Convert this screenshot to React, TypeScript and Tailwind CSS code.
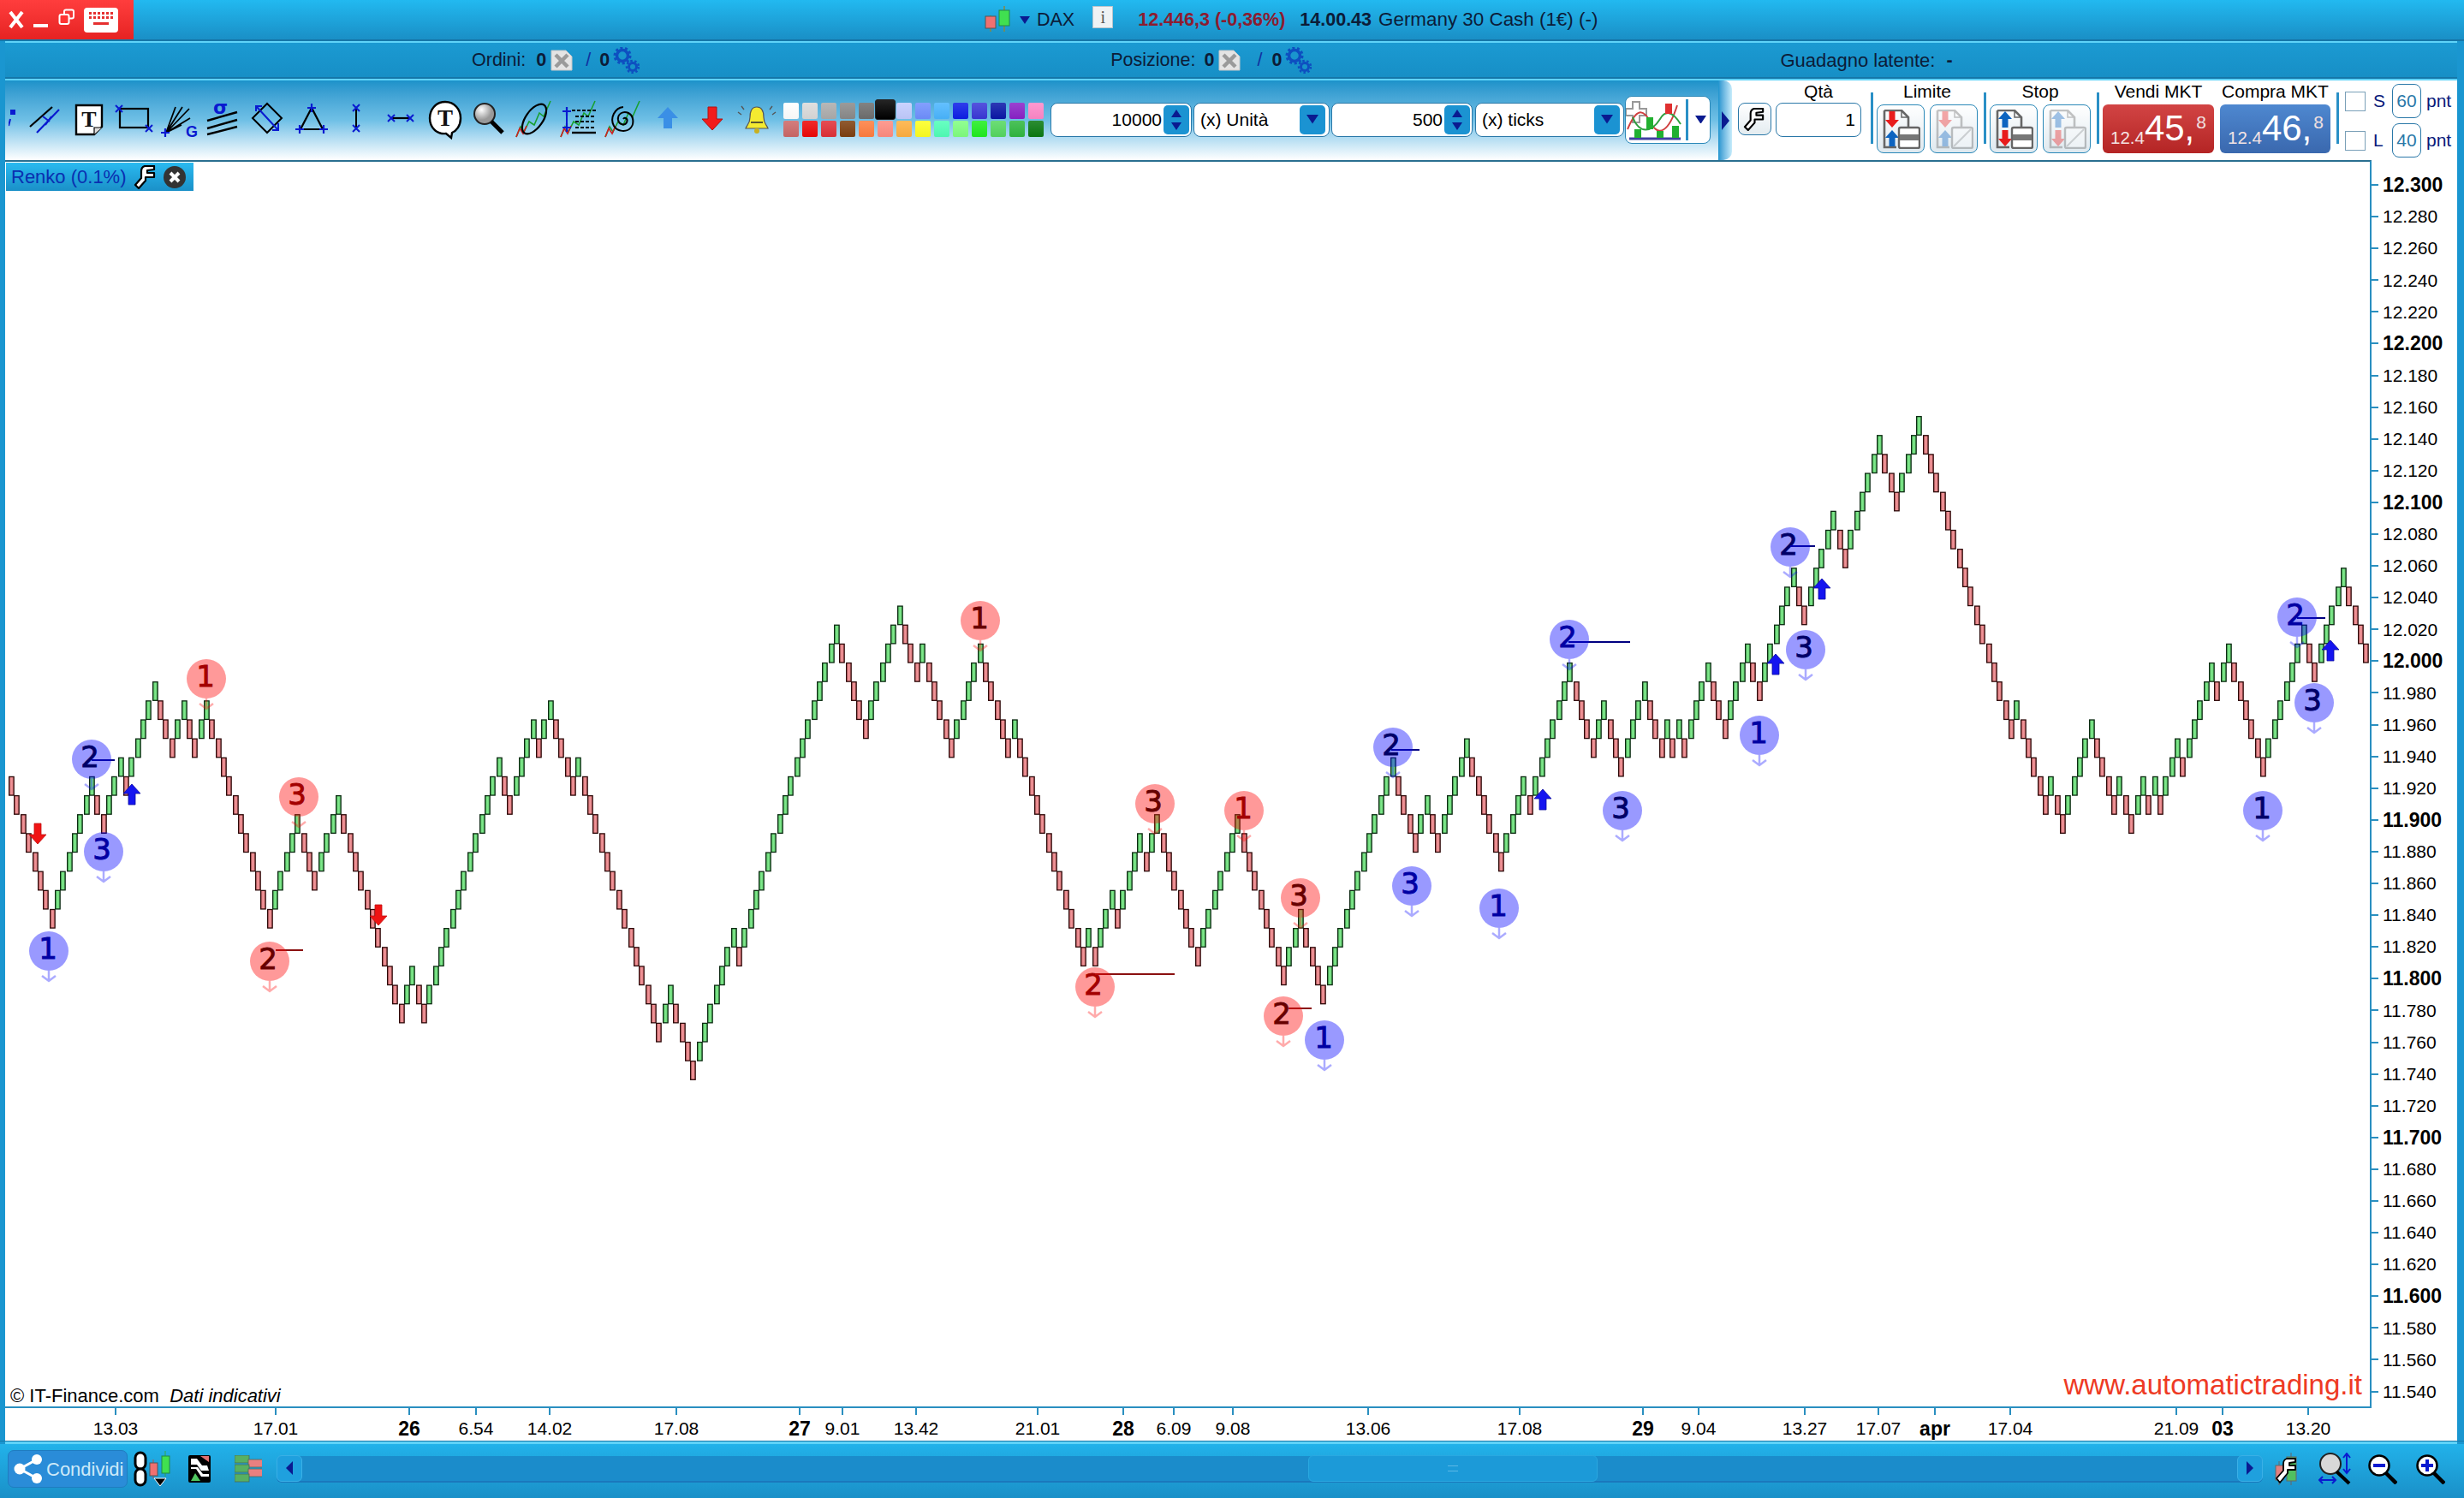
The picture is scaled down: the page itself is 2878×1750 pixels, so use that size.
import React from "react";

const B = "#0a1ad0";
const runs = [-7,7,-2,3,-1,5,-3,2,-2,2,-11,5,-3,4,-11,2,-2,13,-2,4,-1,2,-4,1,-14,2,-4,7,-1,17,-5,6,-3,1,-5,5,-5,1,-12,1,-1,3,-1,4,-1,2,-7,7,-8,3,-4,12,-4,2,-2,5,-6,4,-1,7,-4,2,-3,4,-3,1,-1,1,-1,4,-3,4,-2,6,-2,5,-2,6,-3,4,-16,1,-5,1,-2,5,-4,1,-2,2,-1,1,-1,3,-1,5,-1,2,-6,7,-2,5,-4];

function bricks() {
  const out: { x: number; y: number; up: boolean }[] = [];
  let k = 5;
  let i = 0;
  const push = (up: boolean) => {
    out.push({ x: Math.round((10.3 + i * 6.692) / 2) * 2, y: 796.3 + 22.15 * k, up });
    i++;
  };
  push(false);
  for (const r of runs) {
    const up = r > 0;
    for (let n = 0; n < Math.abs(r); n++) {
      k += up ? -1 : 1;
      push(up);
    }
  }
  return out;
}

type Mark = { c: "b" | "r"; n: string; x: number; y: number; dark: boolean; line?: [number, number, number] };
const marks: Mark[] = [
  { c: "b", n: "1", x: 57, y: 1111, dark: false },
  { c: "b", n: "2", x: 107, y: 887, dark: true, line: [107, 134, 888] },
  { c: "b", n: "3", x: 121, y: 995, dark: false },
  { c: "r", n: "1", x: 241, y: 793, dark: false },
  { c: "r", n: "3", x: 349, y: 931, dark: false },
  { c: "r", n: "2", x: 315, y: 1123, dark: true, line: [322, 354, 1110] },
  { c: "r", n: "1", x: 1145, y: 725, dark: true },
  { c: "r", n: "3", x: 1349, y: 939, dark: true },
  { c: "r", n: "2", x: 1279, y: 1153, dark: false, line: [1279, 1372, 1138] },
  { c: "r", n: "1", x: 1453, y: 947, dark: false },
  { c: "r", n: "3", x: 1519, y: 1049, dark: true },
  { c: "r", n: "2", x: 1499, y: 1187, dark: true, line: [1505, 1532, 1178] },
  { c: "b", n: "1", x: 1547, y: 1215, dark: false },
  { c: "b", n: "2", x: 1627, y: 873, dark: true, line: [1625, 1658, 876] },
  { c: "b", n: "3", x: 1649, y: 1035, dark: false },
  { c: "b", n: "1", x: 1751, y: 1061, dark: false },
  { c: "b", n: "2", x: 1833, y: 747, dark: false, line: [1832, 1904, 750] },
  { c: "b", n: "3", x: 1895, y: 947, dark: true },
  { c: "b", n: "2", x: 2091, y: 639, dark: true, line: [2091, 2120, 638] },
  { c: "b", n: "3", x: 2109, y: 759, dark: true },
  { c: "b", n: "1", x: 2055, y: 859, dark: false },
  { c: "b", n: "2", x: 2683, y: 721, dark: false, line: [2683, 2716, 722] },
  { c: "b", n: "3", x: 2703, y: 821, dark: true },
  { c: "b", n: "1", x: 2643, y: 947, dark: true },
];
const upArrows = [[154, 916], [1802, 922], [2074, 764], [2128, 676], [2722, 748]];
const downArrows = [[44, 962], [442, 1057]];

const xLabels: [string, number, boolean][] = [
  ["13.03", 135, false], ["17.01", 322, false], ["26", 478, true], ["6.54", 556, false], ["14.02", 642, false],
  ["17.08", 790, false], ["27", 934, true], ["9.01", 984, false], ["13.42", 1070, false], ["21.01", 1212, false],
  ["28", 1312, true], ["6.09", 1371, false], ["9.08", 1440, false], ["13.06", 1598, false], ["17.08", 1775, false],
  ["29", 1919, true], ["9.04", 1984, false], ["13.27", 2108, false], ["17.07", 2194, false], ["apr", 2260, true],
  ["17.04", 2348, false], ["21.09", 2542, false], ["03", 2596, true], ["13.20", 2696, false],
];

const yLabels = Array.from({ length: 39 }, (_, i) => {
  const v = 12300 - i * 20;
  return { t: `${Math.floor(v / 1000)}.${String(v % 1000).padStart(3, "0")}`, bold: v % 100 === 0 };
});

function Chart() {
  const bs = bricks();
  return (
    <svg viewBox="6 189 2762 1454" className="block w-full h-full">
      <defs>
        <linearGradient id="gb">
          <stop offset="0" stopColor="#5cc868" />
          <stop offset="0.5" stopColor="#7fe88c" />
          <stop offset="1" stopColor="#5cc868" />
        </linearGradient>
        <linearGradient id="rb">
          <stop offset="0" stopColor="#d87478" />
          <stop offset="0.5" stopColor="#f09498" />
          <stop offset="1" stopColor="#d87478" />
        </linearGradient>
      </defs>
      {bs.map((b, i) => (
        <rect key={i} x={b.x + 0.65} y={b.y + 0.4} width={5.5} height={21.6} fill={b.up ? "url(#gb)" : "url(#rb)"} stroke={b.up ? "#0c2a12" : "#2c0808"} strokeWidth={1.3} />
      ))}
      {marks.map((m, i) => {
        const fill = m.c === "b" ? "#0000ff" : "#ff0000";
        const ink = m.dark ? "#000000" : m.c === "b" ? "#000066" : "#660000";
        const lineCol = m.c === "b" ? "#000080" : "#8a1010";
        return (
          <g key={i}>
            <text x={m.x - (m.n === "1" ? 1 : 2)} y={m.y + 9} textAnchor="middle" fontFamily="DejaVu Sans, sans-serif" fontSize={34} fill={ink} stroke={ink} strokeWidth={0.9}>{m.n}</text>
            {m.line && <line x1={m.line[0]} x2={m.line[1]} y1={m.line[2]} y2={m.line[2]} stroke={lineCol} strokeWidth={2} />}
            <circle cx={m.x} cy={m.y} r={23} fill={fill} fillOpacity={0.4} />
            <path d={`M${m.x} ${m.y + 23}V${m.y + 35}M${m.x - 8} ${m.y + 29}L${m.x} ${m.y + 35}L${m.x + 8} ${m.y + 29}`} stroke={fill} strokeOpacity={0.33} strokeWidth={2.5} fill="none" />
          </g>
        );
      })}
      {upArrows.map(([x, y], i) => (
        <path key={i} d={`M${x} ${y}L${x + 10} ${y + 11}H${x + 4}V${y + 24}H${x - 4}V${y + 11}H${x - 10}Z`} fill="#1414f0" stroke="#0a0aa0" strokeWidth={0.8} />
      ))}
      {downArrows.map(([x, y], i) => (
        <path key={i} d={`M${x - 4} ${y}H${x + 4}V${y + 13}H${x + 10}L${x} ${y + 24}L${x - 10} ${y + 13}H${x - 4}Z`} fill="#f01414" stroke="#c01010" strokeWidth={0.8} />
      ))}
    </svg>
  );
}

const WrenchIcon = ({ s = 28 }: { s?: number }) => (
  <svg width={s} height={s} viewBox="0 0 28 28" fill="none" className="shrink-0">
    <path d="M2 23L6 27L14 18V14H24V9H16V6L24 5V1H13C10 2 9 4 9 7V15Z" fill="#fff" stroke="#000" strokeWidth={2.2} strokeLinejoin="round" />
  </svg>
);

const Ico = ({ w = 48, h = 48, children }: { w?: number; h?: number; children: React.ReactNode }) => (
  <svg width={w} height={h} viewBox={`0 0 ${w} ${h}`} fill="none" className="shrink-0">{children}</svg>
);
const X = ({ x, y, s = 4 }: { x: number; y: number; s?: number }) => (
  <path d={`M${x - s} ${y - s}L${x + s} ${y + s}M${x + s} ${y - s}L${x - s} ${y + s}`} stroke={B} strokeWidth={2} />
);
const P = ({ x, y, s = 5 }: { x: number; y: number; s?: number }) => (
  <path d={`M${x - s} ${y}H${x + s}M${x} ${y - s}V${y + s}`} stroke={B} strokeWidth={2.2} />
);
const Wave = () => <path d="M3 44L8 32L12 38L18 26L24 30L30 16L35 20L43 2" stroke="#18a030" strokeWidth={1.6} />;
const RedWave = () => <path d="M3 44L7 34L11 40L15 31" stroke="#d02020" strokeWidth={1.6} />;

const tools: React.ReactNode[] = [
  <Ico key="1"><path d="M7 32L33 9" stroke="#000" strokeWidth={2.2} /><path d="M15 39L41 12" stroke={B} strokeWidth={2.2} /><path d="M22 20L30 26M32 20L25 30" stroke={B} strokeWidth={2} /></Ico>,
  <Ico key="2"><path d="M9 7H39V32L30 41H9Z" fill="#fff" stroke="#000" strokeWidth={2.4} /><path d="M30 41V33H39" fill="#ddd" stroke="#000" strokeWidth={1.2} /><text x="24" y="32" textAnchor="middle" fontFamily="Liberation Serif, serif" fontWeight="700" fontSize="26" fill="#111">T</text></Ico>,
  <Ico key="3"><rect x="8" y="11" width="33" height="22" stroke="#000" strokeWidth={2.2} /><X x={7} y={11} /><X x={42} y={34} /></Ico>,
  <Ico key="4"><path d="M10 39L21 9M10 39L29 9M10 39L37 11M10 39L38 22M10 39L28 30" stroke="#000" strokeWidth={1.8} /><P x={9} y={39} /><text x="33" y="44" fontFamily="Liberation Sans, sans-serif" fontWeight="700" fontSize="18" fill={B}>G</text></Ico>,
  <Ico key="5" h={60}><text x="13" y="23" fontFamily="DejaVu Sans, sans-serif" fontWeight="700" fontSize="22" fill={B}>σ</text><path d="M6 31L41 21M6 40L41 30M6 47L41 38" stroke="#000" strokeWidth={2.4} /></Ico>,
  <Ico key="6"><path d="M24 5L41 22L24 39L7 22Z" stroke="#000" strokeWidth={2} /><path d="M12 9L36 35M11 14V8H18M37 28V36H30" stroke={B} strokeWidth={2} /></Ico>,
  <Ico key="7"><path d="M24 10L11 35H37Z" stroke="#000" strokeWidth={2.2} /><P x={24} y={10} /><P x={10} y={35} /><P x={38} y={35} /></Ico>,
  <Ico key="8"><path d="M24 10V34" stroke="#000" strokeWidth={2} /><X x={24} y={10} /><X x={24} y={34} /></Ico>,
  <Ico key="9"><path d="M13 22H35" stroke="#000" strokeWidth={2.2} /><X x={13} y={22} /><X x={35} y={22} /></Ico>,
  <Ico key="10"><path d="M24 3C35 3 42 12 42 22C42 31 37 37 32 39L31 45L25 40C13 41 6 32 6 22C6 12 13 3 24 3Z" fill="#fff" stroke="#000" strokeWidth={2.4} /><text x="24" y="31" textAnchor="middle" fontFamily="Liberation Serif, serif" fontWeight="700" fontSize="27" fill="#111">T</text></Ico>,
  <Ico key="11"><defs><radialGradient id="lens" cx="0.35" cy="0.3"><stop offset="0" stopColor="#fff" /><stop offset="1" stopColor="#999" /></radialGradient></defs><circle cx="18" cy="17" r="12" fill="url(#lens)" stroke="#222" strokeWidth={2} /><path d="M26 26L39 39" stroke="#000" strokeWidth={5} /></Ico>,
  <Ico key="12"><Wave /><RedWave /><ellipse cx="24" cy="23" rx="10" ry="20" transform="rotate(35 24 23)" stroke="#000" strokeWidth={2.2} /></Ico>,
  <Ico key="13"><Wave /><RedWave /><path d="M16 13H44M20 20H44M20 26H44M20 33H44" stroke="#000" strokeWidth={2} strokeDasharray="4 2" /><path d="M16 39H44" stroke="#000" strokeWidth={2.4} /><P x={10} y={14} /><P x={10} y={33} /><path d="M10 14V33" stroke={B} strokeWidth={2} /></Ico>,
  <Ico key="14"><Wave /><RedWave /><path d="M24 23C26 20 30 23 28 27C26 31 19 30 18 24C17 17 24 13 30 16C36 19 37 28 33 33C28 39 17 38 13 31C8 22 14 10 24 9" stroke="#000" strokeWidth={2} /></Ico>,
  <Ico key="15"><path d="M24 9L36 22H29V34H19V22H12Z" fill="#3a8fe6" /></Ico>,
  <Ico key="16"><path d="M19 9H29V23H36L24 36L12 23H19Z" fill="#f21c1c" stroke="#b01010" strokeWidth={1} /></Ico>,
  <Ico key="17"><path d="M24 9C30 9 32 14 32 21C32 29 36 30 37 34H11C12 30 16 29 16 21C16 14 18 9 24 9Z" fill="#f4ea30" stroke="#555" strokeWidth={1.2} /><path d="M17 27H31" stroke="#333" strokeWidth={1.6} /><circle cx="24" cy="37" r="3" fill="#c8b020" /><path d="M9 12L6 8M39 12L42 8M6 18L2 15M42 18L46 15" stroke="#555" strokeWidth={1.4} /></Ico>,
];

const palTop = ["#ffffff", "#dadada", "#acacac", "#8a8a8a", "#6e6e6e", "#000000", "#c2ccff", "#6f90ff", "#4ab6ff", "#0d1ee8", "#3a38d8", "#0a18a8", "#8a22c8", "#ff88c8"];
const palBot = ["#cc6868", "#ee0808", "#e03038", "#7e4010", "#ff7e40", "#ff8c80", "#ffb040", "#fdff20", "#50ffb8", "#80ff80", "#20ee20", "#55d860", "#30b840", "#0a7a12"];

const Swatch = ({ c, sel }: { c: string; sel?: boolean }) => (
  <div className="relative w-[18px] h-[19px]">
    <div className={sel ? "absolute -left-[3px] -right-[3px] -top-[4px] -bottom-[1px] rounded-[3px] border-[1.5px] border-[#222]" : "absolute inset-0 rounded-[2px]"} style={{ backgroundColor: c, backgroundImage: "linear-gradient(rgba(255,255,255,.14),rgba(0,0,0,.04))" }} />
  </div>
);

const Tri = ({ up, s = 12 }: { up?: boolean; s?: number }) => (
  <svg width={s} height={s * 0.75} viewBox="0 0 12 9" className="shrink-0"><path d={up ? "M6 0L12 9H0Z" : "M0 0H12L6 9Z"} fill="#0a1a90" /></svg>
);

const NumInput = ({ v, w }: { v: string; w: string }) => (
  <div className={`${w} h-[40px] bg-white rounded-[8px] border-[1.5px] border-[#2a78a8] flex items-center justify-end pr-[2px] text-[21px] text-black`}>
    <span className="mr-[2px]">{v}</span>
    <div className="w-[30px] h-[34px] rounded-[5px] bg-[#1b93d2] flex flex-col items-center justify-center gap-[6px]"><Tri up /><Tri /></div>
  </div>
);
const SelInput = ({ v, w }: { v: string; w: string }) => (
  <div className={`${w} h-[40px] bg-white rounded-[8px] border-[1.5px] border-[#2a78a8] flex items-center justify-between pl-[7px] pr-[4px] text-[21px] text-black`}>
    <span>{v}</span>
    <div className="w-[30px] h-[34px] rounded-[5px] bg-[#1b93d2] flex items-center justify-center"><Tri s={14} /></div>
  </div>
);

const DocX = () => (
  <Ico w={26} h={25}><path d="M1 1H18L25 8V24H1Z" fill="#e4e4e4" stroke="#c8c8c8" /><path d="M6 6L20 20M20 6L6 20" stroke="#9a9a9a" strokeWidth={4.5} /></Ico>
);
const Gears = () => (
  <Ico w={31} h={31}>
    <circle cx="11" cy="10" r="6.5" stroke="#0e4fc0" strokeWidth={3.5} />
    <circle cx="11" cy="10" r="9" stroke="#0e4fc0" strokeWidth={3} strokeDasharray="3 2.65" />
    <circle cx="23" cy="23" r="4.5" stroke="#0e4fc0" strokeWidth={3} />
    <circle cx="23" cy="23" r="7" stroke="#0e4fc0" strokeWidth={2.5} strokeDasharray="2.5 2.5" />
  </Ico>
);

const OrderIcon = ({ kind, faded }: { kind: "limit" | "stop"; faded?: boolean }) => {
  const top = kind === "limit" ? "#e81c1c" : "#0d64c0";
  const bot = kind === "limit" ? "#0d64c0" : "#e81c1c";
  const topUp = kind === "stop";
  const arrow = (x: number, y: number, up: boolean, c: string) => (
    <path d={up ? `M${x} ${y}L${x + 8} ${y + 9}H${x + 3.5}V${y + 19}H${x - 3.5}V${y + 9}H${x - 8}Z` : `M${x - 3.5} ${y}H${x + 3.5}V${y + 10}H${x + 8}L${x} ${y + 19}L${x - 8} ${y + 10}H${x - 3.5}Z`} fill={c} />
  );
  return (
    <div className="w-[56px] h-[57px] rounded-[8px] border-[1.5px] border-[#2a88b8] bg-linear-to-b from-[#ffffff] to-[#dfe9ef] flex items-center justify-center">
      <svg width="46" height="46" viewBox="0 0 46 46" fill="none" opacity={faded ? 0.38 : 1}>
        <path d="M4 1H24L32 9V27" stroke="#666" strokeWidth={2.6} /><path d="M4 1V44H18" stroke="#666" strokeWidth={2.6} />
        <path d="M24 1V9H32" stroke="#666" strokeWidth={1.5} />
        {arrow(13, 2, topUp, top)}
        {arrow(13, 24, !topUp, bot)}
        <rect x="21" y="21" width="24" height="24" rx="2" fill="#fff" stroke="#666" strokeWidth={2.4} />
        {faded ? <path d="M23 43L43 23" stroke="#999" strokeWidth={2} /> : <rect x="22" y="29" width="22" height="7" fill="#777" />}
      </svg>
    </div>
  );
};

const Price = ({ big, from, to }: { big: string; from: string; to: string }) => (
  <div className={`h-[57px] rounded-[6px] flex items-start pl-[9px] text-white bg-linear-to-b ${from} ${to} w-full`}>
    <span className="text-[20.5px] leading-none mt-[29px] text-[#f4e4e4]">12.4</span>
    <span className="text-[42px] leading-none mt-[7px]">{big}</span>
    <span className="text-[21px] leading-none mt-[10px] ml-[2px] text-[#f0e0e0]">8</span>
  </div>
);

const Sep = () => <div className="w-[3px] h-[60px] mt-[14px] bg-[#2a90c6] shrink-0" />;

export default function App() {
  return (
    <div className="w-[2878px] h-[1750px] overflow-hidden flex flex-col bg-[#1a96d0] font-['Liberation_Sans',Arial,sans-serif] text-[21.5px] text-[#0c1c38]">
      {/* title bar */}
      <div className="h-[46px] shrink-0 flex items-center bg-linear-to-b from-[#22b9f0] to-[#1a8fc6]">
        <div className="w-[156px] h-[46px] flex items-center bg-linear-to-b from-[#ff3d3d] to-[#e62222] pl-[9px]">
          <svg width="20" height="22" viewBox="0 0 20 22"><path d="M3 2L17 20M17 2L3 20" stroke="#fff" strokeWidth={4} /></svg>
          <div className="w-[17px] h-[4px] bg-white ml-[10px] mt-[14px]" />
          <svg width="20" height="20" viewBox="0 0 20 20" fill="none" className="ml-[12px] -mt-[6px]"><rect x="7" y="1.5" width="11" height="10" rx="2" stroke="#fff" strokeWidth={2} /><rect x="1.5" y="7" width="11" height="11" rx="2" fill="#f33" stroke="#fff" strokeWidth={2} /></svg>
          <div className="w-[40px] h-[29px] rounded-[4px] bg-white ml-[10px] grid grid-cols-6 gap-[2px] px-[6px] pt-[5px] content-start">
            {Array.from({ length: 12 }).map((_, i) => <div key={i} className="h-[3px] bg-[#e63030]" />)}
            <div className="col-start-2 col-span-4 h-[3px] bg-[#e63030] mt-[2px]" />
          </div>
        </div>
        <svg width="32" height="32" viewBox="0 0 32 32" className="ml-[994px]">
          <path d="M7 11V30M23 0V30" stroke="#884" strokeWidth={1.5} />
          <rect x="1" y="12" width="12" height="14" fill="#f07070" stroke="#555" />
          <rect x="17" y="5" width="12" height="18" fill="#40e050" stroke="#284" />
        </svg>
        <span className="ml-[9px]"><Tri s={12} /></span>
        <span className="ml-[8px] text-[#0c1c38]">DAX</span>
        <div className="ml-[21px] w-[24px] h-[26px] -mt-[6px] bg-[#eef2f4] border border-[#b8c4cc] flex items-center justify-center font-['Liberation_Serif',serif] text-[#555] text-[20px]">i</div>
        <span className="ml-[29px] font-bold text-[#8c1c30] whitespace-pre">12.446,3 (-0,36%)</span>
        <span className="ml-[17px] font-bold">14.00.43</span>
        <span className="ml-[8px] text-[22.4px]">Germany 30 Cash (1€) (-)</span>
      </div>
      <div className="h-[2px] shrink-0 bg-[#1576a8]" />
      <div className="h-[2px] shrink-0 ml-[6px] mr-[8px] bg-[#5fd3f8]" />

      <div className="flex-1 min-h-0 flex flex-col ml-[6px] mr-[8px]">
        {/* row 2 */}
        <div className="h-[40px] shrink-0 flex items-center bg-linear-to-b from-[#1b9ad2] to-[#178fc6]">
          <span className="ml-[545px]">Ordini:</span>
          <b className="ml-[12px]">0</b>
          <span className="ml-[5px]"><DocX /></span>
          <span className="ml-[15px] text-[#1030a0]">/</span>
          <b className="ml-[10px]">0</b>
          <span className="ml-[4px]"><Gears /></span>
          <span className="ml-[550px]">Posizione:</span>
          <b className="ml-[10px]">0</b>
          <span className="ml-[5px]"><DocX /></span>
          <span className="ml-[19px] text-[#1030a0]">/</span>
          <b className="ml-[11px]">0</b>
          <span className="ml-[4px]"><Gears /></span>
          <span className="ml-[547px] text-[22px]">Guadagno latente:</span>
          <b className="ml-[13px]">-</b>
        </div>
        <div className="h-[2px] shrink-0 bg-[#1576a8]" />
        <div className="h-[2px] shrink-0 bg-[#5fd3f8]" />

        {/* toolbar */}
        <div className="h-[93px] shrink-0 flex bg-white">
          <div className="w-[2001px] shrink-0 flex items-center pb-[2px] bg-linear-to-b from-[#1b92ca] via-[#6fc0e6] to-[#ffffff]">
            <div className="w-[20px] flex justify-center"><svg width="12" height="30" viewBox="0 0 12 30"><rect x="2" y="3" width="6" height="6" fill={B} /><path d="M2 14L0 22" stroke={B} strokeWidth={2} /></svg></div>
            {tools.map((t, i) => <div key={i} className="w-[52px] flex justify-center">{t}</div>)}
            <div className="ml-[5px] flex flex-col gap-[2px]">
              <div className="flex gap-[4px]">{palTop.map((c, i) => <Swatch key={i} c={c} sel={i === 5} />)}</div>
              <div className="flex gap-[4px]">{palBot.map((c, i) => <Swatch key={i} c={c} />)}</div>
            </div>
            <div className="ml-[8px]"><NumInput v="10000" w="w-[165px]" /></div>
            <div className="ml-[2px]"><SelInput v="(x) Unità" w="w-[159px]" /></div>
            <div className="ml-[2px]"><NumInput v="500" w="w-[165px]" /></div>
            <div className="ml-[3px]"><SelInput v="(x) ticks" w="w-[174px]" /></div>
            <div className="ml-[1px] w-[100px] h-[56px] rounded-[8px] bg-white border-[1.5px] border-[#2a88b8] flex items-center">
              <svg width="70" height="50" viewBox="0 0 70 50" fill="none">
                <path d="M8 4H16V12H24V20H16V28H8V20H0V12H8Z" fill="#fff" stroke="#999" strokeWidth={2} />
                <path d="M2 36C12 12 20 10 30 30C38 44 50 40 60 8" stroke="#d04040" strokeWidth={2} />
                <path d="M8 22C16 42 30 40 40 24C46 14 54 14 64 30" stroke="#30a040" strokeWidth={2} />
                <path d="M24 22H32V36H24Z" fill="#22b030" /><path d="M46 6H54V18H46Z" fill="#e03030" />
                <path d="M4 47H64" stroke="#4040a0" strokeWidth={3} />
                <path d="M10 36h8v10h-8zM36 38h8v8h-8zM54 32h8v14h-8z" fill="#20b030" />
              </svg>
              <div className="w-[3px] h-[48px] bg-[#2a90c6]" />
              <div className="ml-[8px]"><Tri s={13} /></div>
            </div>
          </div>
          <div className="w-[16px] shrink-0 flex items-center justify-center bg-linear-to-r from-[#1b95cf] to-[#c6ecfb] rounded-r-[10px]">
            <svg width="9" height="22" viewBox="0 0 9 22"><path d="M0 0L9 11L0 22Z" fill="#0a1a90" /></svg>
          </div>
          <div className="flex-1 flex items-start bg-white text-black text-[21px]">
            <div className="ml-[7px] mt-[26px] w-[39px] h-[38px] rounded-[8px] border-[1.5px] border-[#2a78a8] bg-linear-to-b from-[#ffffff] to-[#e4ecf0] flex items-center justify-center">
              <WrenchIcon s={27} />
            </div>
            <div className="ml-[5px] w-[100px] flex flex-col">
              <div className="h-[26px] leading-[26px] text-center">Qtà</div>
              <div className="h-[40px] rounded-[8px] border-[1.5px] border-[#2a78a8] flex items-center justify-end pr-[6px]">1</div>
            </div>
            <div className="ml-[11px]"><Sep /></div>
            <div className="ml-[4px] w-[118px] flex flex-col">
              <div className="h-[28px] leading-[26px] text-center">Limite</div>
              <div className="flex justify-between"><OrderIcon kind="limit" /><OrderIcon kind="limit" faded /></div>
            </div>
            <div className="ml-[7px]"><Sep /></div>
            <div className="ml-[4px] w-[118px] flex flex-col">
              <div className="h-[28px] leading-[26px] text-center">Stop</div>
              <div className="flex justify-between"><OrderIcon kind="stop" /><OrderIcon kind="stop" faded /></div>
            </div>
            <div className="ml-[7px]"><Sep /></div>
            <div className="ml-[4px] w-[130px] flex flex-col">
              <div className="h-[28px] leading-[26px] text-center whitespace-nowrap">Vendi MKT</div>
              <Price big="45," from="from-[#d24444]" to="to-[#b42424]" />
            </div>
            <div className="ml-[7px] w-[129px] flex flex-col">
              <div className="h-[28px] leading-[26px] text-center whitespace-nowrap">Compra MKT</div>
              <Price big="46," from="from-[#4e88d0]" to="to-[#3a68ae]" />
            </div>
            <div className="ml-[7px]"><Sep /></div>
            <div className="ml-[7px] pt-[4px] flex flex-col gap-[6px]">
              {[["S", "60"], ["L", "40"]].map(([a, b]) => (
                <div key={a} className="h-[40px] flex items-center text-[#0a1a7a]">
                  <div className="w-[24px] h-[23px] border-[1.5px] border-[#7aa0b8] bg-white" />
                  <span className="w-[22px] ml-[9px]">{a}</span>
                  <div className="w-[34px] h-[40px] rounded-[8px] border-[1.5px] border-[#2a78a8] flex items-center justify-center text-[#2a78a8]">{b}</div>
                  <span className="ml-[6px]">pnt</span>
                </div>
              ))}
            </div>
          </div>
        </div>

        {/* chart + price scale */}
        <div className="flex-1 min-h-0 flex bg-white">
          <div className="w-[2764px] shrink-0 relative border-t-2 border-t-[#2a6f90] border-r-2 border-r-[#2a8fc0] border-b-2 border-b-[#2a8fc0]">
            <Chart />
            <div className="absolute left-[1px] top-[1px] w-[219px] h-[33px] flex items-center pl-[6px] bg-linear-to-b from-[#2abaf0] to-[#1a90c8] text-[#0a2fb0] text-[22px] leading-[30px]">
              <span>Renko (0.1%)</span>
              <span className="ml-[8px]"><WrenchIcon s={28} /></span>
              <svg width="28" height="28" viewBox="0 0 28 28" className="ml-[6px]"><circle cx="14" cy="14" r="13" fill="#333" /><path d="M9 9L19 19M19 9L9 19" stroke="#fff" strokeWidth={4} /></svg>
            </div>
            <div className="absolute left-[6px] bottom-[0px] text-[22px] leading-[24px] text-black whitespace-pre">© IT-Finance.com  <i>Dati indicativi</i></div>
            <div className="absolute right-[9px] bottom-[6px] text-[33px] leading-[38px] text-[#ee3a24]">www.automatictrading.it</div>
          </div>
          <div className="flex-1 pt-[10.45px] flex flex-col">
            {yLabels.map((l, i) => (
              <div key={i} className="h-[37.1px] shrink-0 flex items-center">
                <div className="w-[8px] h-[2px] bg-[#2a8fc0]" />
                <span className={l.bold ? "ml-[5px] font-bold text-[23px] text-black" : "ml-[5px] text-[21px] text-black"}>{l.t}</span>
              </div>
            ))}
          </div>
        </div>

        {/* x axis */}
        <div className="h-[38px] shrink-0 relative bg-white text-[21px] text-black">
          {xLabels.map(([t, x, b]) => (
            <React.Fragment key={t + x}>
              <div className="absolute top-0 w-[2px] h-[8px] bg-[#2a8fc0]" style={{ left: x - 7 }} />
              <span className={b ? "absolute top-[11px] -translate-x-1/2 font-bold text-[23px] leading-[26px]" : "absolute top-[11px] -translate-x-1/2 leading-[26px]"} style={{ left: x - 6 }}>{t}</span>
            </React.Fragment>
          ))}
        </div>
      </div>

      {/* footer */}
      <div className="h-[1px] shrink-0 bg-[#1576a8]" />
      <div className="h-[3px] shrink-0 ml-[6px] mr-[8px] bg-[#5fd3f8]" />
      <div className="h-[63px] shrink-0 flex items-center pl-[9px] pb-[5px] bg-linear-to-b from-[#22b2ea] to-[#1a90c8]">
        <div className="w-[140px] h-[44px] rounded-[7px] bg-[#2a8cd8] border border-[#1f7cc0] flex items-center text-[#cde9f8] text-[22px]">
          <svg width="34" height="36" viewBox="0 0 34 36" className="ml-[6px]" fill="#fff"><circle cx="27" cy="7" r="6" /><circle cx="7" cy="18" r="6.5" /><circle cx="27" cy="29" r="6" /><path d="M27 7L7 18L27 29" stroke="#fff" strokeWidth={3} fill="none" /></svg>
          <span className="ml-[4px]">Condividi</span>
        </div>
        <svg width="46" height="42" viewBox="0 0 46 42" fill="none" className="ml-[7px]">
          <rect x="2" y="2" width="12" height="19" rx="6" fill="#fff" stroke="#000" strokeWidth={3} />
          <rect x="2" y="21" width="12" height="19" rx="6" fill="#fff" stroke="#000" strokeWidth={3} />
          <path d="M23 10V32" stroke="#a55" /><rect x="19" y="14" width="9" height="15" fill="#f07070" stroke="#555" />
          <path d="M37 0V30" stroke="#3a4" /><rect x="33" y="6" width="9" height="20" fill="#40e050" stroke="#284" />
          <path d="M24 32H38L31 41Z" fill="#000" stroke="#fff" />
        </svg>
        <svg width="26" height="32" viewBox="0 0 26 32" className="ml-[18px]">
          <rect width="26" height="32" rx="2" fill="#000" />
          <path d="M3 30L8 21L14 30Z" fill="#50c860" /><path d="M14 1H24V8Z" fill="#e07070" />
          <path d="M3 4H10L16 12H22L24 18H15L10 11H3ZM3 16H9L15 25H24V22H17L11 14H3Z" fill="#fff" />
        </svg>
        <svg width="32" height="32" viewBox="0 0 32 32" className="ml-[28px]">
          {[[0, 0, "g"], [16, 5, "r"], [0, 11, "g"], [16, 16, "r"], [0, 22, "g"]].map(([x, y, c], i) => (
            <rect key={i} x={x as number} y={y as number} width="17" height="9" fill={c === "g" ? "#58b060" : "#e88080"} stroke="#4a6a5a" strokeWidth={0.8} />
          ))}
        </svg>
        <div className="ml-[17px] w-[2320px] h-[31px] rounded-[6px] bg-[#1b8ccb] border-b-2 border-b-[#1a78bc] flex items-center">
          <div className="w-[30px] h-[31px] rounded-[6px] bg-[#1fa0de] border border-[#3ab0e6] flex items-center justify-center"><svg width="8" height="16" viewBox="0 0 8 16"><path d="M8 0V16L0 8Z" fill="#0a1a90" /></svg></div>
          <div className="ml-[1175px] w-[338px] h-[31px] rounded-[6px] bg-[#1c9ad8] border border-[#2aa8e0] flex items-center justify-center">
            <div className="w-[12px] h-[7px] border-y border-[#5cb8e6]" />
          </div>
          <div className="ml-auto w-[30px] h-[31px] rounded-[6px] bg-[#1fa0de] border border-[#3ab0e6] flex items-center justify-center"><svg width="8" height="16" viewBox="0 0 8 16"><path d="M0 0V16L8 8Z" fill="#0a1a90" /></svg></div>
        </div>
        <svg width="28" height="38" viewBox="0 0 28 38" fill="none" className="ml-[14px]">
          <path d="M5 10V38M19 0V38" stroke="#666" />
          <rect x="1" y="15" width="9" height="17" fill="#e08080" stroke="#666" />
          <rect x="14" y="5" width="11" height="28" fill="#50c060" stroke="#666" />
          <path d="M2 30L6 35L15 24V20H24V15H17V12L24 11V7H14C11 8 10 10 10 13V21Z" fill="#fff" stroke="#000" strokeWidth={1.8} strokeLinejoin="round" />
        </svg>
        <svg width="38" height="38" viewBox="0 0 38 38" fill="none" className="ml-[23px]">
          <circle cx="14" cy="13" r="12" fill="#d8d8d8" stroke="#222" strokeWidth={2} />
          <path d="M21 22L36 36" stroke="#000" strokeWidth={4} />
          <path d="M33 1V24M29 6L33 1L37 6M29 19L33 24L37 19" stroke={B} strokeWidth={2} />
          <path d="M1 32H20M5 28L1 32L5 36M16 28L20 32L16 36" stroke={B} strokeWidth={2} />
        </svg>
        {["M6 14H20", "M6 14H20M13 7V21"].map((d, i) => (
          <svg key={i} width="34" height="36" viewBox="0 0 34 36" fill="none" className={i === 0 ? "ml-[20px]" : "ml-[22px]"}>
            <circle cx="13" cy="14" r="11.5" fill="#fff" stroke="#000" strokeWidth={2.5} />
            <path d={d} stroke={B} strokeWidth={4} />
            <path d="M21 23L33 35" stroke="#000" strokeWidth={4.5} />
          </svg>
        ))}
      </div>
    </div>
  );
}
